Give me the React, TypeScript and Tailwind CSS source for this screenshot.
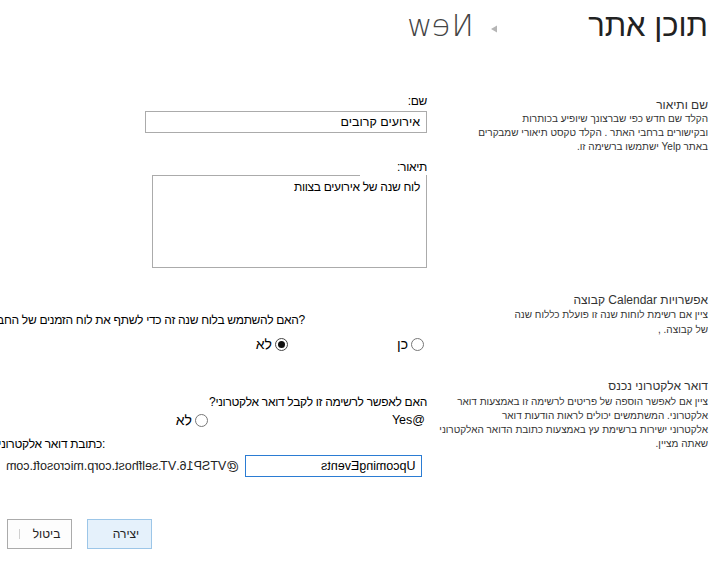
import React from "react";

function Radio({ checked }: { checked?: boolean }) {
  return (
    <span
      className={
        "w-[13px] h-[13px] rounded-full border flex items-center justify-center shrink-0 bg-white " +
        (checked ? "border-[#444]" : "border-[#777]")
      }
    >
      {checked && <span className="w-[7px] h-[7px] rounded-full bg-[#111]" />}
    </span>
  );
}

export default function App() {
  return (
    <div
      dir="rtl"
      className="relative w-[719px] h-[570px] overflow-hidden bg-white text-black font-['Liberation_Sans','DejaVu_Sans',sans-serif]"
    >
      {/* header */}
      <div className="flex items-start h-[94px] pr-[11px] pt-[7px]">
        <div className="w-[115px] shrink-0 whitespace-nowrap text-[31px] leading-[38px] text-[#222]">
          תוכן אתר
        </div>
        <svg className="shrink-0 mr-[96px] mt-[18px]" width="6" height="8" viewBox="0 0 6 8">
          <path d="M0 4 L6 0.5 L6 7.5 Z" fill="#b5b5b5" />
        </svg>
        <div className="shrink-0 mr-[17px] w-[68px] whitespace-nowrap text-[31px] leading-[36px] font-extralight text-[#444] font-['DejaVu_Sans',sans-serif] scale-x-[-1] text-center">
          New
        </div>
      </div>

      {/* section 1 */}
      <div className="flex">
        <div className="w-[292px] shrink-0 pr-[11px] pt-[4px]">
          <div className="text-[12px] leading-[14px] text-[#333] whitespace-nowrap">שם ותיאור</div>
          <div className="text-[10px] leading-[14px] text-[#333] whitespace-nowrap">
            הקלד שם חדש כפי שברצונך שיופיע בכותרות
            <br />
            ובקישורים ברחבי האתר . הקלד טקסט תיאורי שמבקרים
            <br />
            באתר  Yelp ישתמשו ברשימה זו.
          </div>
        </div>
        <div className="flex-1 min-w-0 text-[12px] tracking-[-0.3px] text-black">
          <div className="leading-[14px]">שם:</div>
          <div className="mt-[3px] w-[282px] h-[22px] border border-[#ababab] flex items-center pr-[6px] whitespace-nowrap text-[12.5px] tracking-normal">
            אירועים קרובים
          </div>
          <div className="mt-[27px] leading-[14px]">תיאור:</div>
          <div className="mt-[1px] w-[275px] h-[93px] border border-t-0 border-[#ababab]">
            <div className="h-px w-[207px] bg-[#ababab] mr-auto" />
            <div className="pr-[6px] pt-[4px] leading-[14px] whitespace-nowrap">לוח שנה של אירועים בצוות</div>
          </div>
        </div>
      </div>

      {/* section 2 */}
      <div className="flex mt-[25px]">
        <div className="w-[292px] shrink-0 pr-[11px]">
          <div className="text-[12px] leading-[14px] text-[#333] whitespace-nowrap">אפשרויות Calendar קבוצה</div>
          <div className="text-[10px] leading-[15px] text-[#333] whitespace-nowrap">
            ציין אם רשימת לוחות שנה זו פועלת כללוח שנה
            <br />
            של קבוצה. ,
          </div>
        </div>
        <div className="flex-1 min-w-0 text-[12px] tracking-[-0.3px] text-black">
          <div className="mt-[20px] mr-[122px] leading-[14px] whitespace-nowrap">
            ?האם להשתמש בלוח שנה זה כדי לשתף את לוח הזמנים של החברים
          </div>
          <div className="mt-[10px] flex items-center leading-[14px] mr-[3px] text-[14px] tracking-normal">
            <div className="flex items-center gap-[3px]">
              <Radio />
              <span>כן</span>
            </div>
            <div className="flex items-center gap-[3px] mr-[109px]">
              <Radio checked />
              <span>לא</span>
            </div>
          </div>
        </div>
      </div>

      {/* section 3 */}
      <div className="flex mt-[28px]">
        <div className="w-[292px] shrink-0 pr-[11px]">
          <div className="text-[12px] leading-[14px] text-[#333] whitespace-nowrap">דואר אלקטרוני נכנס</div>
          <div className="mt-[2px] text-[10px] leading-[14px] text-[#333] whitespace-nowrap">
            ציין אם לאפשר הוספה של פריטים לרשימה זו באמצעות דואר
            <br />
            אלקטרוני. המשתמשים יכולים לראות הודעות דואר
            <br />
            אלקטרוני ישירות ברשימת עץ באמצעות כתובת הדואר האלקטרוני
            <br />
            שאתה מציין.
          </div>
        </div>
        <div className="flex-1 min-w-0 text-[12px] tracking-[-0.3px] text-black">
          <div className="mt-[16px] leading-[14px] whitespace-nowrap">האם לאפשר לרשימה זו לקבל דואר אלקטרוני?</div>
          <div className="mt-[4px] flex items-center leading-[14px] mr-[2px]">
            <span className="whitespace-nowrap text-[12.5px] tracking-normal">@Yes</span>
            <div className="flex items-center gap-[3px] mr-[184px] text-[14px] tracking-normal">
              <Radio />
              <span>לא</span>
            </div>
          </div>
          <div className="mt-[10px] mr-[322px] leading-[14px] whitespace-nowrap">:כתובת דואר אלקטרוני</div>
          <div className="mt-[4px] flex items-center mr-[5px] text-[12.5px] tracking-normal">
            <div className="w-[177px] h-[22px] shrink-0 border border-[#2b7cd3] flex items-center pr-[6px]">
              <span className="inline-block scale-x-[-1] whitespace-nowrap" dir="ltr">UpcomingEvents</span>
            </div>
            <span className="mr-[6px] inline-block scale-x-[-1] whitespace-nowrap text-[#222]" dir="ltr">
              @VTSP16.VT.selfhost.corp.microsoft.com
            </span>
          </div>
        </div>
      </div>

      {/* buttons */}
      <div className="flex justify-end gap-[15px] pl-[7px] mt-[42px]">
        <div className="w-[65px] h-[30px] border border-[#9cc6e8] bg-[#e5f1fb] flex items-center justify-center pl-[13px] text-[12px] text-[#222]">
          יצירה
        </div>
        <div className="w-[65px] h-[30px] border border-[#ababab] bg-[#fdfdfd] flex items-center justify-center gap-[13px] text-[12px] text-[#222]">
          <span>ביטול</span>
          <span className="w-px h-[10px] bg-[#d0d0d0]" />
        </div>
      </div>
    </div>
  );
}
